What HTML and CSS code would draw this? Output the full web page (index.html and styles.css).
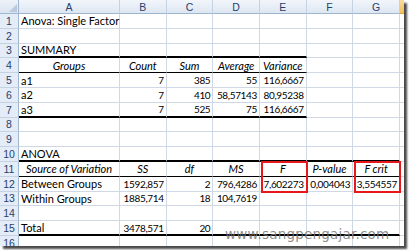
FILE: index.html
```html
<!DOCTYPE html>
<html>
<head>
<meta charset="utf-8">
<link rel="stylesheet" href="styles.css">
</head>
<body>
<div class="frame">
  <div class="sheet">
    <!-- header row -->
    <div class="corner"><svg width="10" height="10" viewBox="0 0 10 10"><polygon points="9,1 9,9 1,9" fill="#b9c9de"/></svg></div>
    <div class="hd">A</div><div class="hd">B</div><div class="hd">C</div><div class="hd">D</div><div class="hd">E</div><div class="hd">F</div><div class="hd">G</div><div class="hd sel"></div>

    <!-- 1 -->
    <div class="rn">1</div><div class="c">Anova: Single Factor</div><div class="c"></div><div class="c"></div><div class="c"></div><div class="c"></div><div class="c"></div><div class="c"></div><div class="c"></div>
    <!-- 2 -->
    <div class="rn">2</div><div class="c"></div><div class="c"></div><div class="c"></div><div class="c"></div><div class="c"></div><div class="c"></div><div class="c"></div><div class="c"></div>
    <!-- 3 -->
    <div class="rn">3</div><div class="c b2">SUMMARY</div><div class="c b2"></div><div class="c b2"></div><div class="c b2"></div><div class="c b2"></div><div class="c"></div><div class="c"></div><div class="c"></div>
    <!-- 4 -->
    <div class="rn">4</div><div class="c i b1">Groups</div><div class="c i b1">Count</div><div class="c i b1">Sum</div><div class="c i b1">Average</div><div class="c i b1">Variance</div><div class="c"></div><div class="c"></div><div class="c"></div>
    <!-- 5 -->
    <div class="rn">5</div><div class="c">a1</div><div class="c n">7</div><div class="c n">385</div><div class="c n">55</div><div class="c n">116,6667</div><div class="c"></div><div class="c"></div><div class="c"></div>
    <!-- 6 -->
    <div class="rn">6</div><div class="c">a2</div><div class="c n">7</div><div class="c n">410</div><div class="c n">58,57143</div><div class="c n">80,95238</div><div class="c"></div><div class="c"></div><div class="c"></div>
    <!-- 7 -->
    <div class="rn">7</div><div class="c b2">a3</div><div class="c n b2">7</div><div class="c n b2">525</div><div class="c n b2">75</div><div class="c n b2">116,6667</div><div class="c"></div><div class="c"></div><div class="c"></div>
    <!-- 8 -->
    <div class="rn">8</div><div class="c"></div><div class="c"></div><div class="c"></div><div class="c"></div><div class="c"></div><div class="c"></div><div class="c"></div><div class="c"></div>
    <!-- 9 -->
    <div class="rn">9</div><div class="c"></div><div class="c"></div><div class="c"></div><div class="c"></div><div class="c"></div><div class="c"></div><div class="c"></div><div class="c"></div>
    <!-- 10 -->
    <div class="rn">10</div><div class="c b2">ANOVA</div><div class="c b2"></div><div class="c b2"></div><div class="c b2"></div><div class="c b2"></div><div class="c b2"></div><div class="c b2"></div><div class="c"></div>
    <!-- 11 -->
    <div class="rn">11</div><div class="c i b1">Source of Variation</div><div class="c i b1">SS</div><div class="c i b1">df</div><div class="c i b1">MS</div><div class="c i b1">F</div><div class="c i b1">P-value</div><div class="c i b1">F crit</div><div class="c"></div>
    <!-- 12 -->
    <div class="rn">12</div><div class="c">Between Groups</div><div class="c n">1592,857</div><div class="c n">2</div><div class="c n">796,4286</div><div class="c n">7,602273</div><div class="c n">0,004043</div><div class="c n">3,554557</div><div class="c"></div>
    <!-- 13 -->
    <div class="rn">13</div><div class="c">Within Groups</div><div class="c n">1885,714</div><div class="c n">18</div><div class="c n">104,7619</div><div class="c"></div><div class="c"></div><div class="c"></div><div class="c"></div>
    <!-- 14 -->
    <div class="rn">14</div><div class="c"></div><div class="c"></div><div class="c"></div><div class="c"></div><div class="c"></div><div class="c"></div><div class="c"></div><div class="c"></div>
    <!-- 15 -->
    <div class="rn">15</div><div class="c b2">Total</div><div class="c n b2">3478,571</div><div class="c n b2">20</div><div class="c b2"></div><div class="c b2"></div><div class="c b2"></div><div class="c b2"></div><div class="c"></div>
    <!-- 16 -->
    <div class="rn">16</div><div class="c"></div><div class="c"></div><div class="c"></div><div class="c"></div><div class="c"></div><div class="c"></div><div class="c"></div><div class="c"></div>

    <div class="hl hl-e"></div>
    <div class="hl hl-g"></div>

    <div class="watermark">www.sangpengajar.com</div>
  </div>
</div>
</body>
</html>
```
FILE: styles.css
```css
html, body {
  margin: 0;
  padding: 0;
  background: #ffffff;
}
.frame {
  width: 409px;
  height: 250px;
  overflow: hidden;
}
.sheet {
  position: relative;
  width: 404px;
  height: 246px;
  overflow: hidden;
  background: #ffffff;
  box-shadow: 3px 3px 2px #4a4a4a;
  display: grid;
  grid-template-columns: 19px 101px repeat(6, 46.67px) 4px;
  grid-template-rows: 14px repeat(16, 14.8px);
  font-family: "Lato", "Liberation Sans", sans-serif;
  font-size: 11px;
  color: #000;
}
.corner {
  background: linear-gradient(#eef2f9, #dbe4f1);
  border-right: 1px solid #9eb6ce;
  border-bottom: 1px solid #9eb6ce;
  box-sizing: border-box;
  display: flex;
  align-items: flex-end;
  justify-content: flex-end;
}
.corner svg { display: block; }
.hd {
  background: linear-gradient(#f2f6fb, #dde6f2);
  border-right: 1px solid #c5d2e3;
  border-bottom: 1px solid #9eb6ce;
  box-sizing: border-box;
  color: #27416b;
  font-family: "Liberation Sans", sans-serif;
  font-size: 10.5px;
  display: flex;
  align-items: center;
  justify-content: center;
}
.hd.sel {
  background: linear-gradient(#f9dba0, #f1c05a);
  border-right: none;
  border-bottom-color: #e0a540;
}
.rn {
  background: #e4ecf7;
  border-right: 1px solid #9eb6ce;
  border-bottom: 1px solid #c5d2e3;
  box-sizing: border-box;
  color: #27416b;
  font-family: "Liberation Sans", sans-serif;
  font-size: 10.5px;
  display: flex;
  align-items: center;
  justify-content: center;
}
.c {
  border-right: 1px solid #d0d7e5;
  border-bottom: 1px solid #d0d7e5;
  box-sizing: border-box;
  padding: 0 2px;
  white-space: nowrap;
  overflow: visible;
  display: flex;
  align-items: center;
  line-height: 1;
}
.n {
  justify-content: flex-end;
  font-size: 10px;
  letter-spacing: -0.35px;
  padding-right: 2px;
}
.i { justify-content: center; font-style: italic; }
.b1 { border-bottom: 1px solid #000; }
.b2 { border-bottom: 2px solid #000; }
.hl {
  position: absolute;
  top: -1px;
  bottom: -1px;
  left: 1px;
  right: -1px;
  border: 2px solid #e8171b;
}
.hl-e { grid-column: 6 / 7; grid-row: 12 / 14; }
.hl-g { grid-column: 8 / 9; grid-row: 12 / 14; }
.watermark {
  position: absolute;
  left: 225px;
  top: 226px;
  font-family: "DejaVu Sans", sans-serif;
  font-size: 13.5px;
  color: rgba(120, 120, 120, 0.85);
  letter-spacing: 0.2px;
  white-space: nowrap;
}
```
